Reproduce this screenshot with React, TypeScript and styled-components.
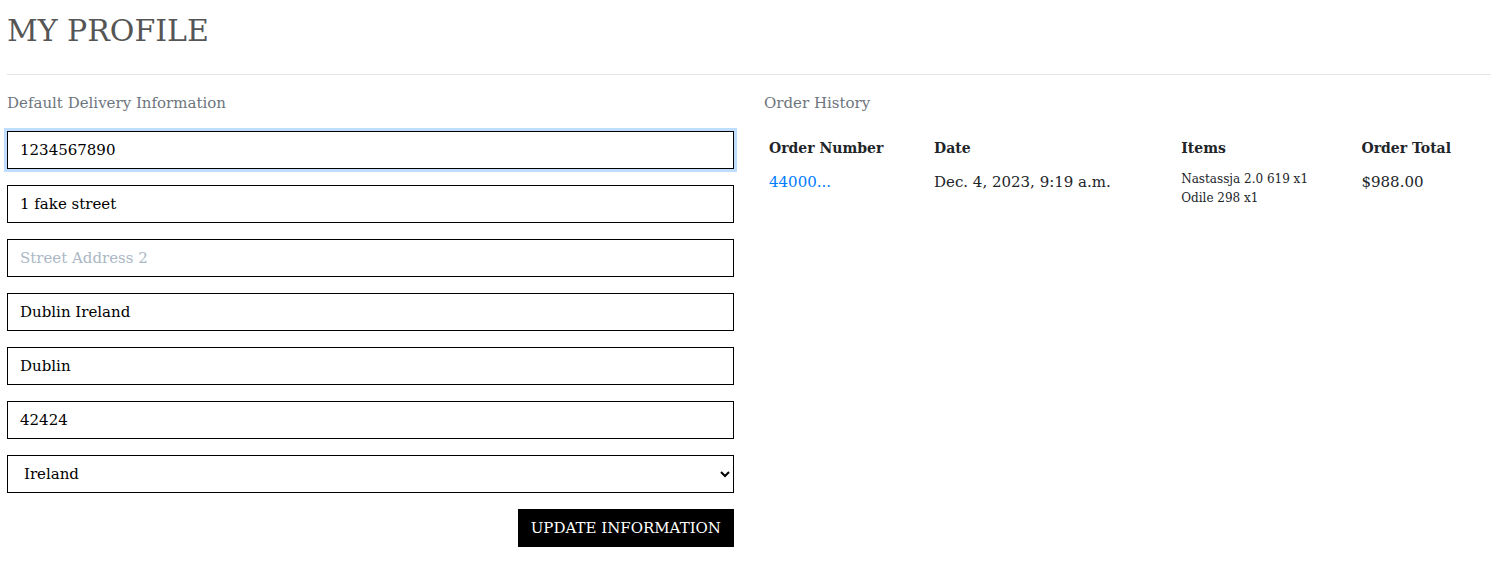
import React from "react";
import styled, { createGlobalStyle } from "styled-components";

const GlobalStyle = createGlobalStyle`
  *, *::before, *::after { box-sizing: border-box; }
  body {
    margin: 0;
    background: #fff;
    color: #212529;
    font-family: "DejaVu Serif", serif;
    font-size: 15px;
    line-height: 24px;
  }
`;

const Page = styled.main`
  padding: 12px 5px 24px 7px;
`;

const Title = styled.h1`
  margin: 0 0 24px;
  color: #555;
  font-size: 30px;
  font-weight: 400;
  line-height: 38px;
  text-transform: uppercase;
`;

const Rule = styled.hr`
  margin: 0 0 16px;
  border: 0;
  border-top: 1px solid rgba(0, 0, 0, 0.1);
`;

const Columns = styled.div`
  display: grid;
  grid-template-columns: minmax(0, 1fr) minmax(0, 1fr);
  gap: 30px;
`;

const SectionTitle = styled.h2`
  margin: 0 0 16px;
  color: #6c757d;
  font-size: 15px;
  font-weight: 400;
  line-height: 24px;
`;

const Form = styled.form`
  display: flex;
  flex-direction: column;
  gap: 16px;
`;

const Input = styled.input`
  width: 100%;
  height: 38px;
  padding: 6px 12px;
  border: 1px solid #000;
  border-radius: 0;
  background: #fff;
  color: #000;
  font: inherit;

  &::placeholder {
    color: #aab7c4;
    opacity: 1;
  }

  &:focus {
    outline: 0;
    box-shadow: 0 0 0 3px rgba(0, 123, 255, 0.25);
  }
`;

const Select = styled.select`
  width: 100%;
  height: 38px;
  padding: 6px 0 6px 12px;
  border: 1px solid #000;
  border-radius: 0;
  background: #fff;
  color: #000;
  font: inherit;
`;

const SubmitButton = styled.button`
  align-self: flex-end;
  height: 38px;
  padding: 6px 12px;
  border: 1px solid #000;
  border-radius: 0;
  background: #000;
  color: #fff;
  font: inherit;
  text-transform: uppercase;
  cursor: pointer;
`;

const Table = styled.table`
  width: 100%;
  border-collapse: collapse;
  table-layout: fixed;
`;

const HeadCell = styled.th<{ $share: number }>`
  width: ${(p) => p.$share}%;
  padding: 5px;
  font-size: 14px;
  font-weight: 700;
  text-align: left;
  white-space: nowrap;
`;

const Cell = styled.td`
  padding: 5px;
  vertical-align: top;
`;

const OrderLink = styled.a`
  color: #007bff;
  text-decoration: none;

  &:hover { text-decoration: underline; }
`;

const ItemList = styled.ul`
  margin: 0;
  padding: 0;
  list-style: none;
  font-size: 12px;
  line-height: 19px;
`;

const fields = [
  { name: "phone", label: "Phone Number", value: "1234567890" },
  { name: "street1", label: "Street Address 1", value: "1 fake street" },
  { name: "street2", label: "Street Address 2", value: "" },
  { name: "town", label: "Town or City", value: "Dublin Ireland" },
  { name: "county", label: "County or State", value: "Dublin" },
  { name: "postcode", label: "Postal Code", value: "42424" },
];

const orders = [
  {
    number: "44000...",
    date: "Dec. 4, 2023, 9:19 a.m.",
    items: ["Nastassja 2.0 619 x1", "Odile 298 x1"],
    total: "$988.00",
  },
];

export default function App() {
  return (
    <>
      <GlobalStyle />
      <Page>
        <Title>My Profile</Title>
        <Rule />
        <Columns>
          <section>
            <SectionTitle>Default Delivery Information</SectionTitle>
            <Form onSubmit={(e) => e.preventDefault()}>
              {fields.map((f, i) => (
                <Input
                  key={f.name}
                  type="text"
                  name={f.name}
                  aria-label={f.label}
                  placeholder={f.label}
                  defaultValue={f.value}
                  autoFocus={i === 0}
                  onFocus={i === 0 ? (e) => e.currentTarget.setSelectionRange(0, 0) : undefined}
                />
              ))}
              <Select name="country" aria-label="Country" defaultValue="IE">
                <option value="IE">Ireland</option>
                <option value="GB">United Kingdom</option>
              </Select>
              <SubmitButton type="submit">Update Information</SubmitButton>
            </Form>
          </section>
          <section>
            <SectionTitle>Order History</SectionTitle>
            <Table>
              <thead>
                <tr>
                  <HeadCell $share={22.7}>Order Number</HeadCell>
                  <HeadCell $share={34}>Date</HeadCell>
                  <HeadCell $share={24.8}>Items</HeadCell>
                  <HeadCell $share={18.5}>Order Total</HeadCell>
                </tr>
              </thead>
              <tbody>
                {orders.map((o) => (
                  <tr key={o.number}>
                    <Cell>
                      <OrderLink href="#order">{o.number}</OrderLink>
                    </Cell>
                    <Cell>{o.date}</Cell>
                    <Cell>
                      <ItemList>
                        {o.items.map((item) => (
                          <li key={item}>{item}</li>
                        ))}
                      </ItemList>
                    </Cell>
                    <Cell>{o.total}</Cell>
                  </tr>
                ))}
              </tbody>
            </Table>
          </section>
        </Columns>
      </Page>
    </>
  );
}
